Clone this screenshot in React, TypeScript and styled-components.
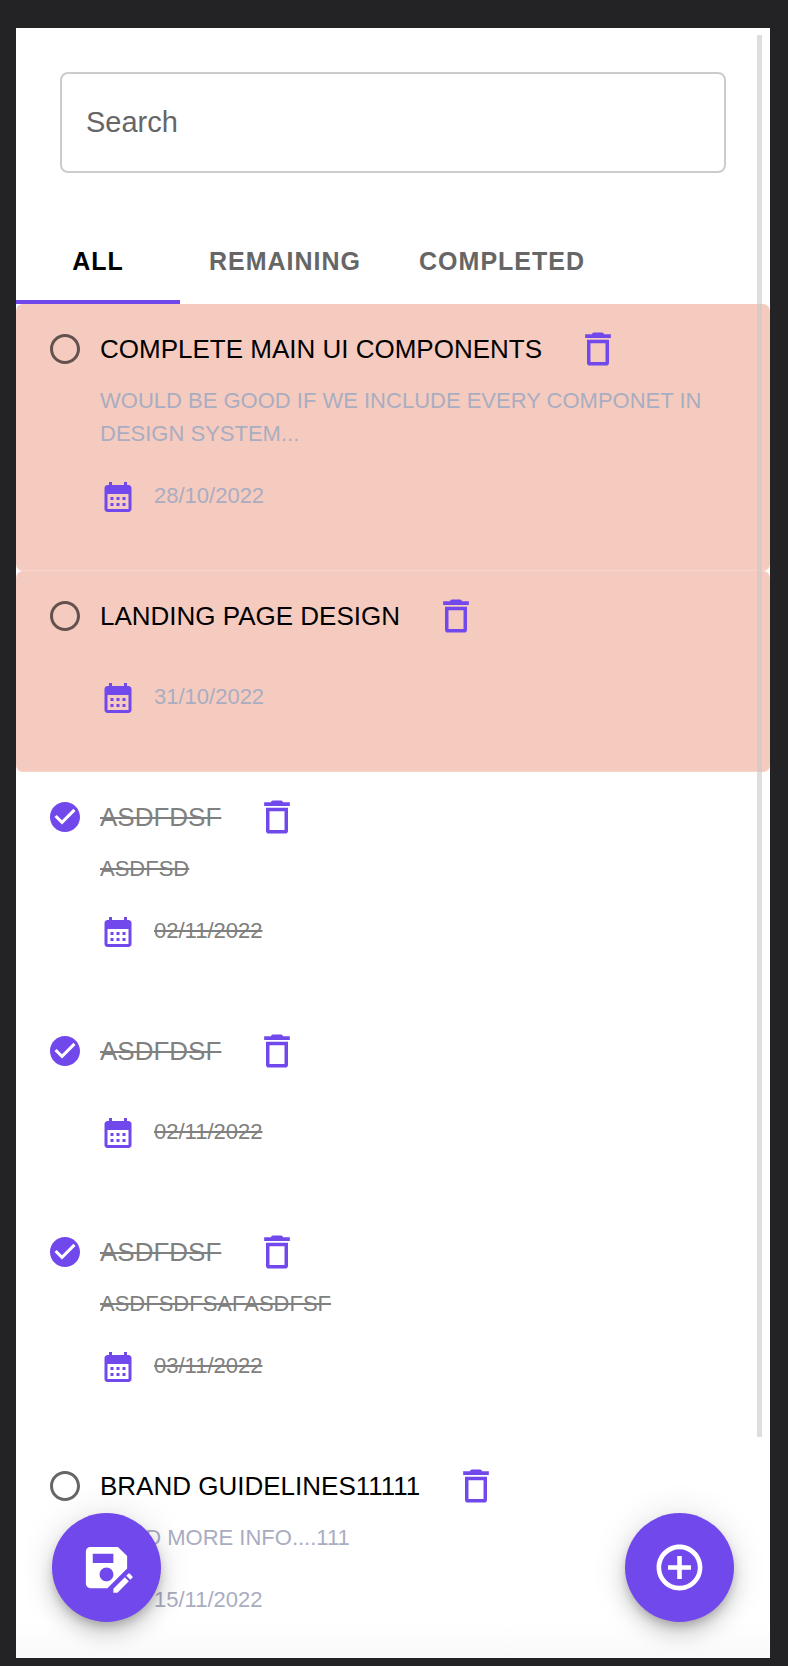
import React, { useState } from "react";
import styled, { createGlobalStyle, css } from "styled-components";

const GlobalStyle = createGlobalStyle`
  *, *::before, *::after { box-sizing: border-box; }
  body {
    margin: 0;
    background: #232325;
    font-family: "Liberation Sans", Arial, Helvetica, sans-serif;
  }
  button, input { font: inherit; }
`;

const accent = "#7148eb";

const Shell = styled.div`
  height: 100vh;
  padding: 28px 18px 8px 16px;
`;

const Panel = styled.main`
  position: relative;
  height: 100%;
  overflow: hidden;
  background: linear-gradient(to top, #f9f9f9, #ffffff 36px);
`;

const ScrollArea = styled.div`
  height: 100%;
  overflow-y: auto;
  scrollbar-width: none;
`;

const ScrollThumb = styled.div`
  position: absolute;
  top: 7px;
  right: 8px;
  width: 5px;
  height: 86%;
  background: rgba(200, 200, 200, 0.6);
  pointer-events: none;
`;

const SearchField = styled.label`
  display: block;
  padding: 44px 44px 38px;
`;

const SearchInput = styled.input`
  display: block;
  width: 100%;
  height: 101px;
  padding: 0 24px;
  border: 2px solid #cccccc;
  border-radius: 8px;
  background: transparent;
  font-size: 29px;
  color: #000;
  outline: none;

  &::placeholder {
    color: #666;
    opacity: 1;
  }
`;

const Tabs = styled.div`
  display: flex;
`;

const Tab = styled.button<{ $active: boolean }>`
  height: 93px;
  min-width: 164px;
  padding: 10px 29px 0;
  border: 0;
  border-bottom: 4px solid ${({ $active }) => ($active ? accent : "transparent")};
  background: none;
  color: ${({ $active }) => ($active ? "#000" : "#666")};
  font-size: 25px;
  font-weight: 700;
  line-height: 32px;
  letter-spacing: 1px;
  text-transform: uppercase;
`;

const List = styled.ul`
  margin: 0;
  padding: 0;
  list-style: none;
`;

const Item = styled.li<{ $overdue: boolean; $done: boolean }>`
  padding: 10px 44px 27px 31px;
  border-radius: 7px;
  text-transform: uppercase;
  color: #a9adc1;
  ${({ $overdue }) =>
    $overdue &&
    css`
      background: #f6cbbf;
      box-shadow: inset 0 -1px #f8d4ca;
    `}
  ${({ $done }) => $done && css`color: #808080;`}
`;

const ItemHead = styled.div`
  display: flex;
  align-items: center;
  height: 70px;
`;

const Toggle = styled.label`
  position: relative;
  display: flex;
  margin-right: 17px;
  color: rgba(0, 0, 0, 0.6);
`;

const ToggleInput = styled.input`
  position: absolute;
  inset: 0;
  margin: 0;
  opacity: 0;
`;

const Title = styled.h2<{ $done: boolean }>`
  margin: 0;
  font-size: 26px;
  font-weight: 400;
  line-height: 39px;
  color: ${({ $done }) => ($done ? "#808080" : "#000")};
  text-decoration: ${({ $done }) => ($done ? "line-through" : "none")};
`;

const DeleteButton = styled.button`
  display: flex;
  flex: none;
  margin-left: 18px;
  padding: 16px;
  border: 0;
  background: none;
  color: ${accent};
`;

const Details = styled.div<{ $done: boolean }>`
  padding-left: 53px;
  font-size: 22px;
  line-height: 33px;
  text-decoration: ${({ $done }) => ($done ? "line-through" : "none")};
`;

const Note = styled.p`
  margin: 0;
`;

const DueRow = styled.div`
  display: flex;
  align-items: center;
  gap: 18px;
  height: 94px;
`;

const DueDate = styled.time`
  padding-bottom: 4px;
`;

const Icon = styled.svg<{ $size: number; $color?: string }>`
  display: block;
  flex: none;
  width: ${({ $size }) => $size}px;
  height: ${({ $size }) => $size}px;
  fill: ${({ $color }) => $color ?? "currentColor"};
`;

const Fab = styled.button<{ $side: "left" | "right" }>`
  position: absolute;
  bottom: 36px;
  ${({ $side }) => $side}: 36px;
  display: flex;
  align-items: center;
  justify-content: center;
  width: 109px;
  height: 109px;
  padding: 0;
  border: 0;
  border-radius: 50%;
  background: ${accent};
  color: #fff;
  box-shadow:
    0 6px 10px -2px rgba(0, 0, 0, 0.2),
    0 12px 20px 0 rgba(0, 0, 0, 0.14),
    0 2px 36px 0 rgba(0, 0, 0, 0.12);
`;

const paths = {
  circle:
    "M12 2C6.48 2 2 6.48 2 12s4.48 10 10 10 10-4.48 10-10S17.52 2 12 2zm0 18c-4.42 0-8-3.58-8-8s3.58-8 8-8 8 3.58 8 8-3.58 8-8 8z",
  checked:
    "M12 2C6.48 2 2 6.48 2 12s4.48 10 10 10 10-4.48 10-10S17.52 2 12 2zm-2 15-5-5 1.41-1.41L10 14.17l7.59-7.59L19 8l-9 9z",
  trash:
    "M6 19.6c0 .8.6 1.4 1.4 1.4h9.2c.8 0 1.4-.6 1.4-1.4V7H6v12.600zM7.900 8.900h8.200v10.200H7.900V8.900zM15.200 4c0-.6-.4-1-1-1H9.800c-.6 0-1 .4-1 1H5v2h14V4h-3.800z",
  calendar:
    "M19 4h-1V2h-2v2H8V2H6v2H5c-1.11 0-1.99.9-1.99 2L3 20c0 1.1.89 2 2 2h14c1.1 0 2-.9 2-2V6c0-1.1-.9-2-2-2zm0 16H5V10h14v10zM9 14H7v-2h2v2zm4 0h-2v-2h2v2zm4 0h-2v-2h2v2zm-8 4H7v-2h2v2zm4 0h-2v-2h2v2zm4 0h-2v-2h2v2z",
  save:
    "M21 12.4V7l-4-4H5c-1.11 0-2 .9-2 2v14c0 1.1.89 2 2 2h7.4l8.6-8.6zM15 15c0 1.66-1.34 3-3 3s-3-1.34-3-3 1.34-3 3-3 3 1.34 3 3zM6 6h9v4H6V6zM19.99 16.25l1.77 1.77L16.77 23H15v-1.77l4.99-4.98zM23.25 16.51l-.85.85-1.77-1.77.85-.85c.2-.2.51-.2.71 0l1.06 1.06c.2.2.2.52 0 .71z",
  add: "M13 7h-2v4H7v2h4v4h2v-4h4v-2h-4V7zm-1-5C6.48 2 2 6.48 2 12s4.48 10 10 10 10-4.48 10-10S17.52 2 12 2zm0 18c-4.41 0-8-3.59-8-8s3.59-8 8-8 8 3.59 8 8-3.59 8-8 8z",
};

function Glyph({ name, size, color }: { name: keyof typeof paths; size: number; color?: string }) {
  return (
    <Icon viewBox="0 0 24 24" $size={size} $color={color} aria-hidden="true">
      <path d={paths[name]} fillRule="evenodd" />
    </Icon>
  );
}

interface Task {
  id: number;
  title: string;
  note?: string;
  due: string;
  done?: boolean;
  overdue?: boolean;
}

const initialTasks: Task[] = [
  {
    id: 1,
    title: "Complete main UI components",
    note: "Would be good if we include every componet in design system...",
    due: "28/10/2022",
    overdue: true,
  },
  { id: 2, title: "Landing page design", due: "31/10/2022", overdue: true },
  { id: 3, title: "asdfdsf", note: "asdfsd", due: "02/11/2022", done: true },
  { id: 4, title: "asdfdsf", due: "02/11/2022", done: true },
  { id: 5, title: "asdfdsf", note: "asdfsdfsafasdfsf", due: "03/11/2022", done: true },
  { id: 6, title: "Brand guidelines11111", note: "Need more info....111", due: "15/11/2022" },
];

const filters = ["All", "Remaining", "Completed"] as const;

export default function App() {
  const [tasks, setTasks] = useState(initialTasks);
  const [filter, setFilter] = useState<(typeof filters)[number]>("All");
  const [query, setQuery] = useState("");

  const visible = tasks.filter(
    (task) =>
      (filter === "All" || (filter === "Completed") === !!task.done) &&
      task.title.toLowerCase().includes(query.toLowerCase()),
  );

  const toggle = (id: number) =>
    setTasks((list) => list.map((task) => (task.id === id ? { ...task, done: !task.done } : task)));
  const remove = (id: number) => setTasks((list) => list.filter((task) => task.id !== id));

  return (
    <Shell>
      <GlobalStyle />
      <Panel>
        <ScrollArea>
          <SearchField>
            <SearchInput
              type="text"
              placeholder="Search"
              aria-label="Search"
              value={query}
              onChange={(event) => setQuery(event.target.value)}
            />
          </SearchField>
          <Tabs role="tablist">
            {filters.map((name) => (
              <Tab
                key={name}
                type="button"
                role="tab"
                aria-selected={filter === name}
                $active={filter === name}
                onClick={() => setFilter(name)}
              >
                {name}
              </Tab>
            ))}
          </Tabs>
          <List>
            {visible.map((task) => {
              const done = !!task.done;
              return (
                <Item key={task.id} $overdue={!!task.overdue && !done} $done={done}>
                  <ItemHead>
                    <Toggle>
                      <ToggleInput
                        type="checkbox"
                        checked={done}
                        aria-label={task.title}
                        onChange={() => toggle(task.id)}
                      />
                      <Glyph name={done ? "checked" : "circle"} size={36} color={done ? accent : undefined} />
                    </Toggle>
                    <Title $done={done}>{task.title}</Title>
                    <DeleteButton type="button" aria-label="Delete task" onClick={() => remove(task.id)}>
                      <Glyph name="trash" size={44} />
                    </DeleteButton>
                  </ItemHead>
                  <Details $done={done}>
                    {task.note && <Note>{task.note}</Note>}
                    <DueRow>
                      <Glyph name="calendar" size={36} color={accent} />
                      <DueDate>{task.due}</DueDate>
                    </DueRow>
                  </Details>
                </Item>
              );
            })}
          </List>
        </ScrollArea>
        <ScrollThumb />
        <Fab type="button" $side="left" aria-label="Save tasks">
          <Glyph name="save" size={55} />
        </Fab>
        <Fab type="button" $side="right" aria-label="Add task">
          <Glyph name="add" size={55} />
        </Fab>
      </Panel>
    </Shell>
  );
}
